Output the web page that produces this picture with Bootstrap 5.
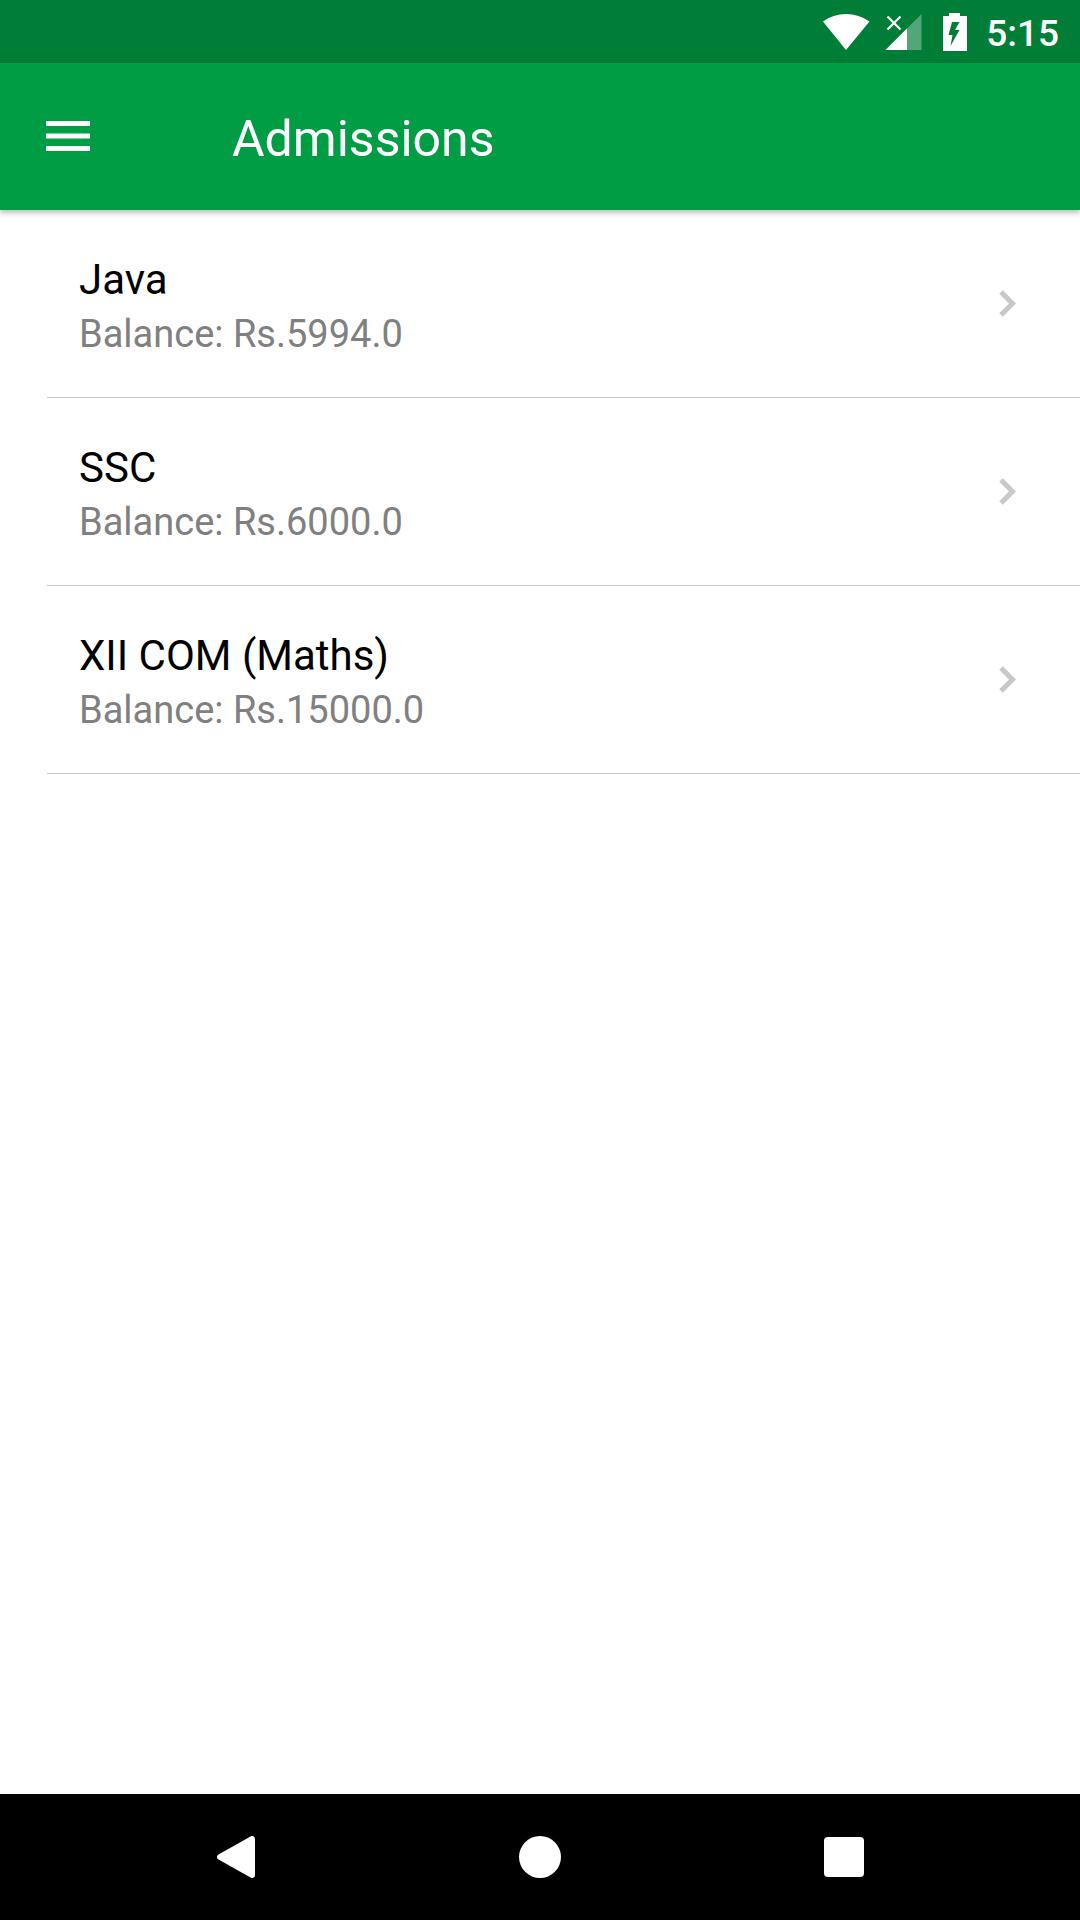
<!DOCTYPE html>
<html lang="en">
<head>
<meta charset="utf-8">
<meta name="viewport" content="width=device-width, initial-scale=1">
<title>Admissions</title>
<link href="https://cdn.jsdelivr.net/npm/bootstrap@5.3.0/dist/css/bootstrap.min.css" rel="stylesheet">
<style>
  body { font-family: Roboto, "Noto Sans", sans-serif; color: #000; background: #fff; }
  svg { display: block; }
  .status-bar { height: 63px; background: #007d37; padding-right: 21px; }
  .clock { font-size: 37px; line-height: 40px; font-weight: 500; margin-left: 17px; padding-top: 4px; }
  .app-bar { height: 147px; background: #009d44; padding: 0 32px; box-shadow: 0 3px 5px rgba(0, 0, 0, .25); z-index: 1; }
  .menu-btn { padding: 0 14px 2px; margin-right: 128px; border: 0; }
  .app-title { font-size: 50px; line-height: 60px; padding-top: 4px; font-weight: 400; }
  .fee-list { padding-left: 47px; }
  .fee-item { padding: 43px 64px 36px 32px; border-bottom: 1px solid #c8c8c8; color: #000; text-decoration: none; }
  .fee-name { font-size: 42px; line-height: 54px; font-weight: 400; }
  .fee-balance { font-size: 38px; line-height: 54px; color: #808080; }
  .nav-keys { height: 126px; background: #000; }
  .key-btn { width: 304px; border: 0; border-radius: 0; }
</style>
</head>
<body class="min-vh-100 d-flex flex-column">
  <div class="status-bar d-flex align-items-center justify-content-end text-white">
    <svg width="146" height="38" viewBox="0 0 146 38" fill="#fff" aria-hidden="true">
      <path d="M0 8.500Q10 1 23 1T46.500 8.500L23 37z"/>
      <path d="M98.500 1v36H62.500z" opacity=".32"/>
      <path d="M84 15.500V37H62.500z"/>
      <path d="M64.500 3.500l13 13M77.500 3.500l-13 13" stroke="#fff" stroke-width="2.200" fill="none"/>
      <path fill-rule="evenodd" d="M126 0h11v3h7v35h-24V3h6zM129 9l-3.500 13h4l-2 11 9-16h-4.500l4.500-8z"/>
    </svg>
    <span class="clock">5:15</span>
  </div>
  <header class="app-bar position-relative d-flex align-items-center text-white">
    <button class="menu-btn btn" type="button" aria-label="Menu">
      <svg width="44" height="30" viewBox="0 0 44 30" fill="#fff"><path d="M0 0h44v5H0zM0 12.500h44v5H0zM0 25h44v5H0z"/></svg>
    </button>
    <h1 class="app-title m-0">Admissions</h1>
  </header>
  <main class="fee-list flex-grow-1">
    <a class="fee-item d-flex align-items-center justify-content-between" href="#java">
      <div>
        <h2 class="fee-name m-0">Java</h2>
        <p class="fee-balance m-0">Balance: Rs.5994.0</p>
      </div>
      <svg class="mb-2" width="17" height="27" viewBox="0 0 17 27" fill="none" stroke="#c8c8c8" stroke-width="5"><path d="M2 2l11.500 11.500L2 25"/></svg>
    </a>
    <a class="fee-item d-flex align-items-center justify-content-between" href="#ssc">
      <div>
        <h2 class="fee-name m-0">SSC</h2>
        <p class="fee-balance m-0">Balance: Rs.6000.0</p>
      </div>
      <svg class="mb-2" width="17" height="27" viewBox="0 0 17 27" fill="none" stroke="#c8c8c8" stroke-width="5"><path d="M2 2l11.500 11.500L2 25"/></svg>
    </a>
    <a class="fee-item d-flex align-items-center justify-content-between" href="#xii-com">
      <div>
        <h2 class="fee-name m-0">XII COM (Maths)</h2>
        <p class="fee-balance m-0">Balance: Rs.15000.0</p>
      </div>
      <svg class="mb-2" width="17" height="27" viewBox="0 0 17 27" fill="none" stroke="#c8c8c8" stroke-width="5"><path d="M2 2l11.500 11.500L2 25"/></svg>
    </a>
  </main>
  <nav class="nav-keys d-flex justify-content-center" aria-label="System navigation">
    <button class="key-btn btn d-flex align-items-center justify-content-center" type="button" aria-label="Back">
      <svg width="38" height="42" viewBox="0 0 38 42" fill="#fff" stroke="#fff" stroke-width="6" stroke-linejoin="round"><path d="M35 3v36L3 21z"/></svg>
    </button>
    <button class="key-btn btn d-flex align-items-center justify-content-center" type="button" aria-label="Home">
      <svg width="42" height="42" viewBox="0 0 42 42" fill="#fff"><circle cx="21" cy="21" r="21"/></svg>
    </button>
    <button class="key-btn btn d-flex align-items-center justify-content-center" type="button" aria-label="Recent apps">
      <svg width="40" height="40" viewBox="0 0 40 40" fill="#fff"><rect width="40" height="40" rx="4"/></svg>
    </button>
  </nav>
  <script src="https://cdn.jsdelivr.net/npm/bootstrap@5.3.0/dist/js/bootstrap.bundle.min.js"></script>
</body>
</html>
